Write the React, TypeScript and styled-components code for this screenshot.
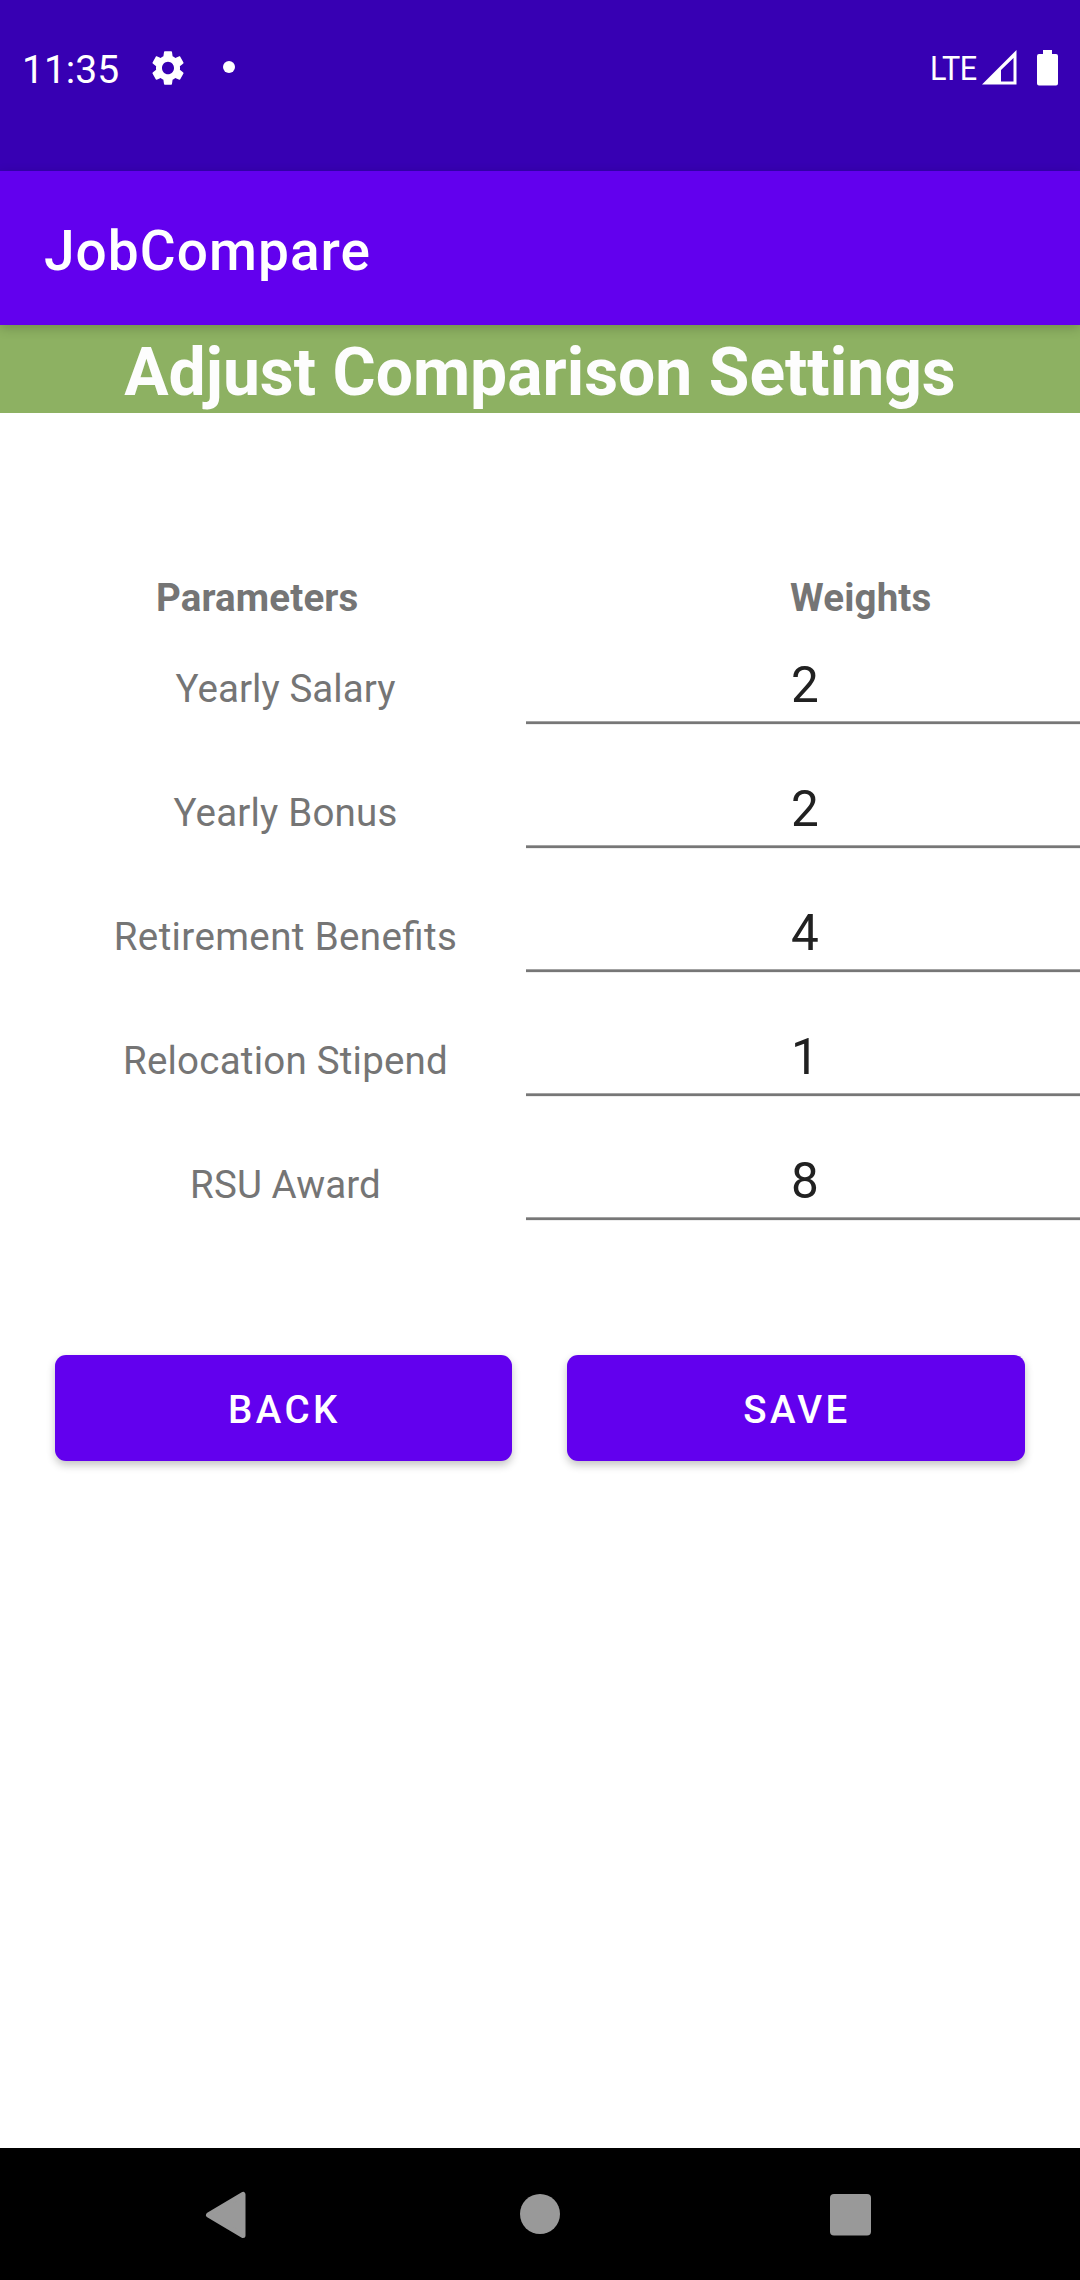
import React, { useState } from "react";
import styled, { createGlobalStyle } from "styled-components";

const GlobalStyle = createGlobalStyle`
  * { box-sizing: border-box; }
  body {
    margin: 0;
    background: #fff;
    font-family: Roboto, "Liberation Sans", sans-serif;
  }
`;

const Screen = styled.div`
  display: flex;
  flex-direction: column;
  width: 1080px;
  height: 2280px;
  overflow: hidden;
  background: #fff;
`;

const StatusBar = styled.header`
  display: flex;
  align-items: flex-start;
  justify-content: space-between;
  height: 171px;
  padding: 44px 22px 0 22px;
  background: #3700b3;
  color: #fff;
`;

const StatusGroup = styled.div`
  display: flex;
  align-items: center;
  height: 48px;
`;

const Clock = styled.span`
  width: 126px;
  padding-top: 5px;
  font-size: 39px;
  line-height: 45px;
`;

const NotificationDot = styled.span`
  width: 12px;
  height: 12px;
  margin: -2px 0 0 35px;
  border-radius: 50%;
  background: #fff;
`;

const NetworkType = styled.span`
  width: 52px;
  font-size: 34px;
  line-height: 48px;
  letter-spacing: -0.5px;
  transform: scaleX(0.9);
  transform-origin: left center;
`;

const StatusIcon = styled.svg<{ $gap?: number }>`
  display: block;
  margin: -1px 0 0 ${(p) => p.$gap ?? 0}px;
  fill: #fff;
`;

const AppBar = styled.div`
  position: relative;
  z-index: 1;
  display: flex;
  align-items: center;
  height: 154px;
  padding: 6px 44px 0;
  background: #6200ee;
  box-shadow: 0 3px 11px rgba(0, 0, 0, 0.2);
`;

const AppTitle = styled.h1`
  margin: 0;
  color: #fff;
  font-size: 55px;
  font-weight: 500;
  line-height: 64px;
  letter-spacing: 0.019em;
`;

const Banner = styled.h2`
  height: 88px;
  margin: 0;
  background: #8db162;
  color: #fdfdfd;
  font-size: 66px;
  font-weight: 700;
  line-height: 95px;
  text-align: center;
`;

const Content = styled.main`
  display: flex;
  flex: 1;
  flex-direction: column;
  padding-top: 159px;
`;

const Row = styled.div`
  display: grid;
  grid-template-columns: 515px 1fr;
  height: 124px;
`;

const HeaderRow = styled(Row)`
  height: 52px;
`;

const HeaderCell = styled.div<{ $indent: number }>`
  padding-left: ${(p) => p.$indent}px;
  color: #757575;
  font-size: 38.5px;
  font-weight: 700;
  line-height: 52px;
  letter-spacing: 0.14px;
`;

const Label = styled.label<{ $tracking: number }>`
  padding: 42px 0 0 56px;
  color: #757575;
  font-size: 38.5px;
  font-feature-settings: "liga" 1;
  line-height: 46px;
  letter-spacing: ${(p) => p.$tracking}px;
  text-align: center;
`;

const WeightInput = styled.input`
  width: 554px;
  height: 101px;
  margin-left: 11px;
  padding: 26px 0 5px 265px;
  border: 0;
  outline: 0;
  background: linear-gradient(#a3a3a3 1px, #777 1px 3px, #ededed 3px) left bottom / 100% 4px no-repeat;
  color: #212121;
  font-family: inherit;
  font-size: 49.5px;
  line-height: 58px;
`;

const Actions = styled.div`
  display: grid;
  grid-template-columns: 457px 458px;
  gap: 55px;
  margin-top: 111px;
  padding-left: 55px;
`;

const ActionButton = styled.button`
  height: 106px;
  padding: 2px 0 0 2px;
  border: 0;
  border-radius: 11px;
  background: #6200ee;
  box-shadow: 0 4px 8px rgba(0, 0, 0, 0.24);
  color: #fff;
  font-family: inherit;
  font-size: 38.5px;
  font-weight: 500;
  letter-spacing: 0.0893em;
  text-transform: uppercase;
`;

const NavBar = styled.nav`
  display: flex;
  height: 132px;
  padding: 43px 209px 0 204px;
  justify-content: space-between;
  background: #000;
`;

const NavIcon = styled.svg`
  display: block;
  fill: #999;
  stroke: #999;
`;

const parameters = [
  { name: "Yearly Salary", weight: "2", tracking: 0.08 },
  { name: "Yearly Bonus", weight: "2", tracking: 0.2 },
  { name: "Retirement Benefits", weight: "4", tracking: 0.38 },
  { name: "Relocation Stipend", weight: "1", tracking: 0.22 },
  { name: "RSU Award", weight: "8", tracking: 0.1 },
];

export default function App() {
  const [weights, setWeights] = useState(parameters.map((p) => p.weight));

  const updateWeight = (index: number, value: string) =>
    setWeights((current) => current.map((w, i) => (i === index ? value : w)));

  return (
    <>
      <GlobalStyle />
      <Screen>
        <StatusBar>
          <StatusGroup>
            <Clock>11:35</Clock>
            <StatusIcon width="40" height="42" viewBox="0 0 24 24" preserveAspectRatio="none">
              <path d="M19.14 12.94c.04-.3.06-.61.06-.94 0-.32-.02-.64-.07-.94l2.03-1.58c.18-.14.23-.41.12-.61l-1.92-3.32c-.12-.22-.37-.29-.59-.22l-2.39.96c-.5-.38-1.03-.7-1.62-.94l-.36-2.54c-.04-.24-.24-.41-.48-.41h-3.84c-.24 0-.43.17-.47.41l-.36 2.54c-.59.24-1.13.57-1.62.94l-2.39-.96c-.22-.08-.47 0-.59.22L2.74 8.87c-.12.21-.08.47.12.61l2.03 1.58c-.05.3-.09.63-.09.94s.02.64.07.94l-2.03 1.58c-.18.14-.23.41-.12.61l1.92 3.32c.12.22.37.29.59.22l2.39-.96c.5.38 1.03.7 1.62.94l.36 2.54c.05.24.24.41.48.41h3.84c.24 0 .44-.17.47-.41l.36-2.54c.59-.24 1.13-.56 1.62-.94l2.39.96c.22.08.47 0 .59-.22l1.92-3.32c.12-.22.07-.47-.12-.61l-2.01-1.58zM12 15.6c-1.98 0-3.6-1.62-3.6-3.6s1.62-3.6 3.6-3.6 3.6 1.62 3.6 3.6-1.62 3.6-3.6 3.6z" />
            </StatusIcon>
            <NotificationDot />
          </StatusGroup>
          <StatusGroup>
            <NetworkType>LTE</NetworkType>
            <StatusIcon width="35" height="35" viewBox="0 0 35 35">
              <path fillRule="evenodd" d="M0 34.5 34.5 0V34.5ZM19 20V31.5H31.5V8Z" />
            </StatusIcon>
            <StatusIcon $gap={20} width="21" height="36" viewBox="0 0 21 36">
              <path d="M6 0h9v4h4a2 2 0 0 1 2 2v27.500a2 2 0 0 1-2 2H2a2 2 0 0 1-2-2V6a2 2 0 0 1 2-2h4Z" />
            </StatusIcon>
          </StatusGroup>
        </StatusBar>

        <AppBar>
          <AppTitle>JobCompare</AppTitle>
        </AppBar>
        <Banner>Adjust Comparison Settings</Banner>

        <Content>
          <HeaderRow>
            <HeaderCell $indent={156}>Parameters</HeaderCell>
            <HeaderCell $indent={275}>Weights</HeaderCell>
          </HeaderRow>
          {parameters.map((p, i) => (
            <Row key={p.name}>
              <Label htmlFor={`weight-${i}`} $tracking={p.tracking}>
                {p.name}
              </Label>
              <WeightInput
                id={`weight-${i}`}
                value={weights[i]}
                onChange={(e) => updateWeight(i, e.target.value)}
              />
            </Row>
          ))}
          <Actions>
            <ActionButton>Back</ActionButton>
            <ActionButton>Save</ActionButton>
          </Actions>
        </Content>

        <NavBar>
          <NavIcon width="43" height="48" viewBox="0 0 43 48">
            <path d="M4.500 24 39 3.500V44.500Z" strokeWidth="5" strokeLinejoin="round" />
          </NavIcon>
          <NavIcon width="42" height="46" viewBox="0 0 42 46">
            <circle cx="22" cy="23" r="20" stroke="none" />
          </NavIcon>
          <NavIcon width="41" height="46" viewBox="0 0 41 46">
            <rect x="0" y="3" width="41" height="41.500" rx="4" stroke="none" />
          </NavIcon>
        </NavBar>
      </Screen>
    </>
  );
}
